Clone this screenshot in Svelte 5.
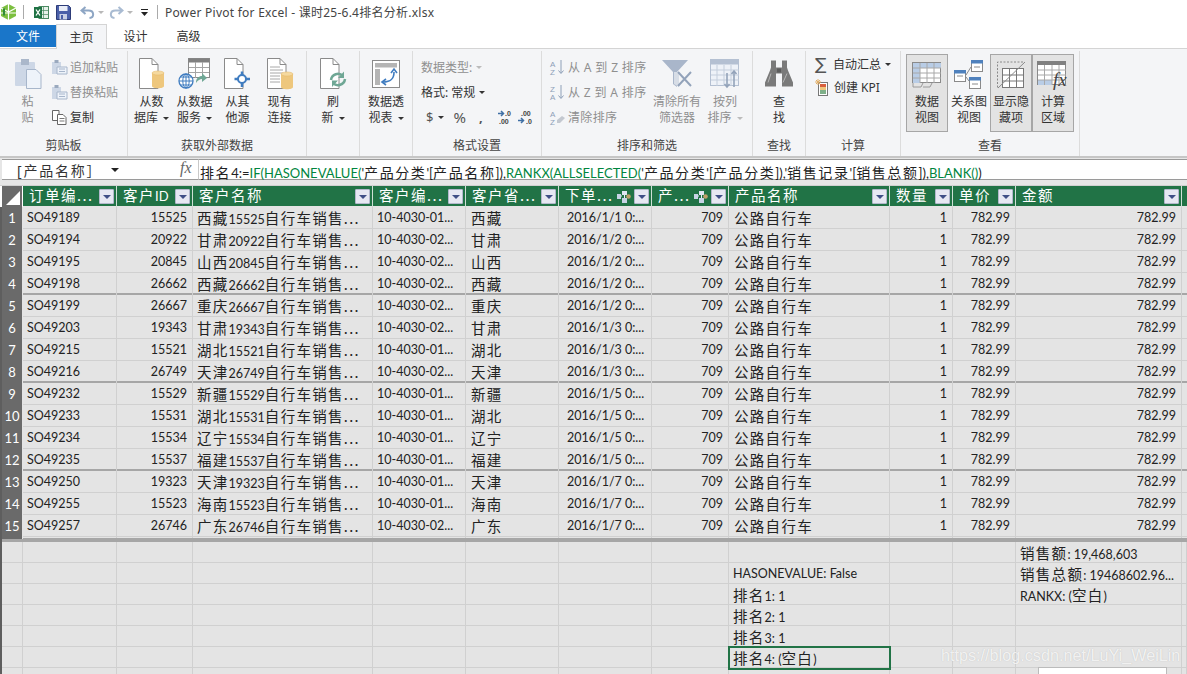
<script lang="ts">
  const filterCols = [
    { label: '订单编...', link: false },
    { label: '客户ID', link: false },
    { label: '客户名称', link: false },
    { label: '客户编...', link: false },
    { label: '客户省...', link: false },
    { label: '下单...', link: true },
    { label: '产...', link: true },
    { label: '产品名称', link: false },
    { label: '数量', link: false },
    { label: '单价', link: false },
    { label: '金额', link: false },
  ];

  const orders = [
    ['SO49189', '15525', '西藏', '01', '1/1'],
    ['SO49194', '20922', '甘肃', '02', '1/2'],
    ['SO49195', '20845', '山西', '02', '1/2'],
    ['SO49198', '26662', '西藏', '02', '1/2'],
    ['SO49199', '26667', '重庆', '02', '1/2'],
    ['SO49203', '19343', '甘肃', '02', '1/3'],
    ['SO49215', '15521', '湖北', '01', '1/3'],
    ['SO49216', '26749', '天津', '02', '1/3'],
    ['SO49232', '15529', '新疆', '01', '1/5'],
    ['SO49233', '15531', '湖北', '01', '1/5'],
    ['SO49234', '15534', '辽宁', '01', '1/5'],
    ['SO49235', '15537', '福建', '01', '1/5'],
    ['SO49250', '19323', '天津', '01', '1/7'],
    ['SO49255', '15523', '海南', '01', '1/7'],
    ['SO49257', '26746', '广东', '02', '1/7'],
  ];

  const formula = [
    ['排名4:=', ''],
    ['IF(HASONEVALUE(', 'fn'],
    ["'产品分类'[产品名称]),", ''],
    ['RANKX(ALLSELECTED(', 'fn'],
    ["'产品分类'[产品分类]),'销售记录'[销售总额]),", ''],
    ['BLANK()', 'fn'],
    [')', ''],
  ];

  // the grid font has narrow digits, CJK runs need a bigger size next to them
  function runs(text: string) {
    return text.match(/[\u3000-\u9fff\uff00-\uffef]+(?:\.\.\.)?|(?:(?![\u3000-\u9fff\uff00-\uffef]).)+/g) ?? [];
  }
  const isZh = (s: string) => /[\u3000-\u9fff\uff00-\uffef]/.test(s);
</script>

{#snippet mixed(text)}
  {#each runs(text) as r}<span class={isZh(r) ? 'zh' : ''}>{r}</span>{/each}
{/snippet}

{#snippet caret()}<i class="caret"></i>{/snippet}

{#snippet filterBtn()}
  <span class="filter"><i></i></span>
{/snippet}

{#snippet linkIcon()}
  <svg class="link" width="15" height="14" viewBox="0 0 15 14">
    <rect x="0" y="4" width="4" height="5" fill="#c8d4e6" />
    <rect x="5" y="1" width="5" height="4" fill="#dfe6f1" />
    <rect x="5" y="8" width="5" height="5" fill="#c8d4e6" />
    <path d="M4 6h1M7.500 5v3" stroke="#e9eef5" />
    <circle cx="11.500" cy="6.500" r="2.300" fill="#bfa06a" />
  </svg>
{/snippet}

{#snippet docIcon()}
  <path d="M1.500 .5H14L20 6.500V30.500H1.500Z" fill="#fff" stroke="#8a8a8a" />
  <path d="M14 .5V6.500H20" fill="none" stroke="#8a8a8a" />
{/snippet}

{#snippet dbIcon(x, y)}
  <path d="M{x} {y + 2}v13c0 3 12 3 12 0v-13Z" fill="#eec77d" />
  <ellipse cx={x + 6} cy={y + 2} rx="6" ry="2" fill="#f5d99f" stroke="#e3b765" stroke-width=".5" />
{/snippet}

<div class="app">
  <header class="titlebar">
    <svg width="17" height="18" viewBox="0 0 17 18">
      <path d="M8.500 1 16 5v8l-7.500 4L1 13V5Z" fill="#7cbf3f" />
      <path d="M8.500 1v16M1 5l7.500 4 7.500-4M1 10h15" stroke="#fff" stroke-width="1.200" fill="none" />
      <path d="M4 5.500v7" stroke="#2f8a3a" stroke-width="2" />
    </svg>
    <i class="qsep first"></i>
    <svg width="15" height="15" viewBox="0 0 15 15">
      <rect x="5" y="1.500" width="9.500" height="12" fill="#e7f1ea" stroke="#4b8a62" />
      <path d="M9.500 1.500v12M5 5.500h9.500M5 9.500h9.500" stroke="#4b8a62" stroke-width=".7" />
      <rect x="0" y="2" width="8" height="11" fill="#1f7244" />
      <path d="m2 4.500 4 6m0-6-4 6" stroke="#fff" stroke-width="1.300" />
    </svg>
    <svg class="save" width="15" height="15" viewBox="0 0 15 15">
      <path d="M.5.5h12l2 2v12H.5Z" fill="#4a5fa8" stroke="#2d3c78" />
      <rect x="3" y="1" width="8.500" height="5" fill="#e9edf7" />
      <rect x="3.500" y="9" width="7.500" height="5.500" fill="#c9d0e4" />
      <rect x="5" y="10" width="2" height="4" fill="#4a5fa8" />
    </svg>
    <svg class="undo" width="15" height="13" viewBox="0 0 15 13">
      <path d="M5.500 1 1.500 4.500l4 3.500M2 4.500h6.500c6 0 6 7 1 7.500" fill="none" stroke="#8ea6c4" stroke-width="2" />
    </svg>
    <i class="mini"></i>
    <svg class="redo" width="15" height="13" viewBox="0 0 15 13">
      <path d="M9.500 1l4 3.500-4 3.500M13 4.500H6.500c-6 0-6 7-1 7.500" fill="none" stroke="#a9bbd2" stroke-width="2" />
    </svg>
    <i class="mini"></i>
    <svg class="customize" width="7" height="7" viewBox="0 0 7 7"><path d="M0 0h7v1H0ZM0 3h7L3.500 7Z" fill="#222" /></svg>
    <i class="qsep"></i>
    <span class="doc-title">Power Pivot for Excel - 课时25-6.4排名分析.xlsx</span>
  </header>

  <nav class="tabs">
    <span class="tab file">文件</span>
    <span class="tab active">主页</span>
    <span class="tab">设计</span>
    <span class="tab">高级</span>
  </nav>

  <section class="ribbon">
    <div class="group" style="width: 128px">
      <div class="group-body">
        <div class="big off" style="width: 41px; margin-left: 7px">
          <svg class="big-icon" width="28" height="32" viewBox="0 0 28 32">
            <rect x="1" y="4" width="20" height="24" rx="1" fill="#cdd7e6" />
            <rect x="7" y="1" width="8" height="6" fill="#aab7ca" />
            <path d="M12.500 11.500H22l5 5v14H12.500Z" fill="#eef3fa" stroke="#a7b6cb" />
          </svg>
          <span>粘</span><span>贴</span>
        </div>
        <div class="stack clip">
          <div class="small off">
            <svg width="17" height="15" viewBox="0 0 17 15"><rect x="1" y="2" width="9" height="12" fill="#cdd7e6" /><rect x="3.500" y="0" width="4" height="3" fill="#9aa9be" /><path d="M6 7h10v7H6Z" fill="#eef3fa" stroke="#a7b6cb" /><path d="M8 9h6M8 11.500h6" stroke="#a7b6cb" /></svg>
            追加粘贴
          </div>
          <div class="small off">
            <svg width="17" height="15" viewBox="0 0 17 15"><rect x="1" y="2" width="9" height="12" fill="#cdd7e6" /><rect x="3.500" y="0" width="4" height="3" fill="#9aa9be" /><path d="M6 7h10v7H6Z" fill="#eef3fa" stroke="#a7b6cb" /><path d="M8 9h6M8 11.500h6" stroke="#a7b6cb" /></svg>
            替换粘贴
          </div>
          <div class="small">
            <svg width="17" height="15" viewBox="0 0 17 15"><path d="M1.500.5H8v10H1.500Z" fill="#fff" stroke="#666" /><path d="M6.500 4.500H12l3 3v7H6.500Z" fill="#fff" stroke="#666" /><path d="M8.500 8.500h5M8.500 11h5" stroke="#777" /></svg>
            复制
          </div>
        </div>
      </div>
      <div class="group-name">剪贴板</div>
    </div>

    <div class="group" style="width: 179px">
      <div class="group-body">
        <div class="big" style="width: 43px; margin-left: 2px">
          <svg class="big-icon" width="27" height="32" viewBox="0 0 27 32">
            {@render docIcon()}
            {@render dbIcon(14, 13)}
          </svg>
          <span>从数</span><span>据库 {@render caret()}</span>
        </div>
        <div class="big" style="width: 43px">
          <svg class="big-icon" width="33" height="32" viewBox="0 0 33 32">
            <rect x="10.500" y=".5" width="21" height="19" fill="#fff" stroke="#8a8a8a" />
            <rect x="10.500" y=".5" width="21" height="4" fill="#808080" />
            <path d="M17.500 4v16M24.500 4v16M11 9.500h20M11 14.500h20" stroke="#a5a5a5" />
            <circle cx="8" cy="23" r="7" fill="#fff" stroke="#3f7cc0" stroke-width="1.300" />
            <path d="M1 23h14M8 16v14M3 19h10M3 27h10" stroke="#3f7cc0" />
            <ellipse cx="8" cy="23" rx="3.200" ry="7" fill="none" stroke="#3f7cc0" />
            <path d="M18 25c0-5 3-7 6-7v-3l5 5-5 4v-3c-2 0-4 1-6 4Z" fill="#6fa795" />
          </svg>
          <span>从数据</span><span>服务 {@render caret()}</span>
        </div>
        <div class="big" style="width: 43px">
          <svg class="big-icon" width="30" height="32" viewBox="0 0 30 32">
            {@render docIcon()}
            <circle cx="19" cy="21" r="4" fill="#fff" stroke="#3f7cc0" stroke-width="2" />
            <path d="M19 13.500V17M19 25v4M11.500 21H15M23 21h4" stroke="#3f7cc0" stroke-width="2.500" />
          </svg>
          <span>从其</span><span>他源</span>
        </div>
        <div class="big" style="width: 41px">
          <svg class="big-icon" width="28" height="32" viewBox="0 0 28 32">
            {@render docIcon()}
            <path d="M4 9h10M4 12h13M4 15h13M4 18h10M4 21h10M4 24h10" stroke="#a8a8a8" />
            {@render dbIcon(15, 14)}
          </svg>
          <span>现有</span><span>连接</span>
        </div>
      </div>
      <div class="group-name">获取外部数据</div>
    </div>

    <div class="group" style="width: 53px">
      <div class="group-body">
        <div class="big" style="width: 52px">
          <svg class="big-icon" width="28" height="32" viewBox="0 0 28 32">
            {@render docIcon()}
            <path d="M12 22a7 7 0 0 1 12-4M26 21a7 7 0 0 1-12 4" fill="none" stroke="#6fa795" stroke-width="2.500" />
            <path d="M25 13.500V20h-6ZM13 29v-6.500h6Z" fill="#6fa795" />
          </svg>
          <span>刷</span><span>新 {@render caret()}</span>
        </div>
      </div>
    </div>

    <div class="group" style="width: 53px">
      <div class="group-body">
        <div class="big" style="width: 52px">
          <svg class="big-icon" width="28" height="28" viewBox="0 0 28 28">
            <rect x=".5" y=".5" width="27" height="27" fill="#fff" stroke="#8a8a8a" />
            <rect x="3" y="3" width="22" height="4.500" fill="#b5b5b5" />
            <rect x="3" y="9" width="5" height="16" fill="#b5b5b5" />
            <path d="M11 22c8 0 11-3 11-10" fill="none" stroke="#3f7cc0" stroke-width="1.600" />
            <path d="M19 13l3-4 3 4M14 19l-4 3 4 3" fill="none" stroke="#3f7cc0" stroke-width="1.600" />
          </svg>
          <span>数据透</span><span>视表 {@render caret()}</span>
        </div>
      </div>
    </div>

    <div class="group" style="width: 129px">
      <div class="group-body">
        <div class="stack format">
          <div class="small off">数据类型: <i class="caret pale"></i></div>
          <div class="small">格式: 常规 {@render caret()}</div>
          <div class="small numfmt">
            <span class="sym">$</span>{@render caret()}<span class="sym pct">%</span><span class="sym comma">,</span>
            <svg class="over" width="17" height="15" viewBox="0 0 17 15"><path d="M1 3.500h5M4 1l2.500 2.500L4 6" fill="none" stroke="#3f6fa5" stroke-width="1.500" /><text x="8" y="6" class="tiny">.0</text><text x="2" y="14" class="tiny">.00</text></svg>
            <svg class="over" width="17" height="15" viewBox="0 0 17 15"><text x="4" y="6" class="tiny">.00</text><path d="M1 10.500h5M4 8l2.500 2.500L4 13" fill="none" stroke="#3f6fa5" stroke-width="1.500" /><text x="9" y="14" class="tiny">.0</text></svg>
          </div>
        </div>
      </div>
      <div class="group-name">格式设置</div>
    </div>

    <div class="group" style="width: 211px">
      <div class="group-body">
        <div class="stack sort">
          <div class="small off spaced">
            <svg class="over" width="15" height="15" viewBox="0 0 15 15"><text x="0" y="7" class="az">A</text><text x="0" y="15" class="az">Z</text><path d="M11 0v13M8.500 10.500 11 13.500l2.500-3" fill="none" stroke="#8ea0b8" /></svg>
            从 A 到 Z 排序
          </div>
          <div class="small off spaced">
            <svg class="over" width="15" height="15" viewBox="0 0 15 15"><text x="0" y="7" class="az">Z</text><text x="0" y="15" class="az">A</text><path d="M11 0v13M8.500 10.500 11 13.500l2.500-3" fill="none" stroke="#8ea0b8" /></svg>
            从 Z 到 A 排序
          </div>
          <div class="small off spaced">
            <svg class="over" width="15" height="15" viewBox="0 0 15 15"><text x="0" y="7" class="az">A</text><text x="0" y="15" class="az">Z</text><path d="m7 10 5-4 3 2-5 5H7Z" fill="#c3c8d0" /></svg>
            清除排序
          </div>
        </div>
        <div class="big off" style="width: 52px">
          <svg class="big-icon" width="32" height="30" viewBox="0 0 32 30">
            <path d="M1 1h26L16 13v15l-4-3V13Z" fill="#a9b6ca" />
            <path d="M13 13h5v15l-5-3Z" fill="#d7dde6" />
            <path d="m17 13 13 14M30 13 17 27" stroke="#93a3ba" stroke-width="2" />
          </svg>
          <span>清除所有</span><span>筛选器</span>
        </div>
        <div class="big off" style="width: 44px">
          <svg class="big-icon" width="30" height="30" viewBox="0 0 30 30">
            <rect x=".5" y=".5" width="28" height="26" fill="#eef2f8" stroke="#b4c0d2" />
            <rect x=".5" y=".5" width="28" height="5" fill="#b4c0d2" />
            <path d="M7 6v21M14 6v21M21 6v21M1 11h28M1 16h28M1 21h28" stroke="#c4cedc" />
            <path d="M17 14v14M14.500 25l2.500 3 2.500-3M24 28V12M21.500 15l2.500-3 2.500 3" fill="none" stroke="#93a3ba" stroke-width="1.600" />
          </svg>
          <span>按列</span><span>排序 <i class="caret pale"></i></span>
        </div>
      </div>
      <div class="group-name">排序和筛选</div>
    </div>

    <div class="group" style="width: 53px">
      <div class="group-body">
        <div class="big" style="width: 52px">
          <svg class="big-icon" width="28" height="27" viewBox="0 0 28 27">
            <path d="M6 0h5v7h6V0h5v7l1 3 5 12v4H17V13h-6v13H0v-4l5-12 1-3Z" fill="#7a7a7a" />
            <path d="M12 8h4v4h-4Z" fill="#5c5c5c" />
            <path d="M3 22l3-9M18 22l4-9" stroke="#b5b5b5" />
          </svg>
          <span>查</span><span>找</span>
        </div>
      </div>
      <div class="group-name">查找</div>
    </div>

    <div class="group" style="width: 95px">
      <div class="group-body">
        <div class="stack calc">
          <div class="small">
            <span class="sigma">∑</span>自动汇总 {@render caret()}
          </div>
          <div class="small">
            <svg class="kpi" width="14" height="17" viewBox="0 0 14 17">
              <rect x="3.500" y="3.500" width="9" height="13" fill="#fff" stroke="#777" />
              <rect x="5" y="5" width="6" height="3" fill="#d9603e" />
              <rect x="5" y="8" width="6" height="3" fill="#eec77d" />
              <rect x="5" y="11" width="6" height="4" fill="#7fb08a" />
              <path d="M3 0v6M0 3h6M1 1l4 4M5 1 1 5" stroke="#e2b06a" />
            </svg>
            创建 KPI
          </div>
        </div>
      </div>
      <div class="group-name">计算</div>
    </div>

    <div class="group views" style="width: 179px">
      <div class="group-body">
        <div class="big view on">
          <svg class="big-icon" width="30" height="26" viewBox="0 0 30 26">
            <rect x=".5" y=".5" width="28" height="20" fill="#fff" stroke="#8a8a8a" />
            <rect x="1" y="1" width="28" height="5" fill="#b9cde6" />
            <rect x="1" y="1" width="7" height="20" fill="#b9cde6" />
            <path d="M8 1v20M15 1v20M22 1v20M1 6h28M1 11h28M1 16h28" stroke="#a8a8a8" />
            <path d="M1 21v4h8l2-4M11 25h7l2-4" fill="none" stroke="#9a9a9a" />
          </svg>
          <span>数据</span><span>视图</span>
        </div>
        <div class="big view">
          <svg class="big-icon" width="30" height="30" viewBox="0 0 30 30">
            <rect x=".5" y="10.500" width="11" height="11" fill="#fff" stroke="#8a8a8a" /><rect x="0" y="10" width="12" height="3.500" fill="#4f81bd" />
            <rect x="17.500" y=".5" width="11" height="11" fill="#fff" stroke="#8a8a8a" /><rect x="17" y="0" width="12" height="3.500" fill="#4f81bd" />
            <rect x="15.500" y="17.500" width="11" height="11" fill="#fff" stroke="#8a8a8a" /><rect x="15" y="17" width="12" height="3.500" fill="#4f81bd" />
            <path d="M12 15 17 7M12 17l3 4M3 16h6M20 7h6M18 24h6" stroke="#8a8a8a" />
          </svg>
          <span>关系图</span><span>视图</span>
        </div>
        <div class="big view on">
          <svg class="big-icon" width="30" height="28" viewBox="0 0 30 28">
            <path d="M1.500 26.500V1H28" fill="none" stroke="#8a8a8a" stroke-dasharray="2 1.500" />
            <rect x="6.500" y="7.500" width="21" height="19" fill="#fff" stroke="#777" />
            <path d="M13.500 8v19M20.500 8v19M7 14h21M7 20h21" stroke="#777" />
            <path d="M2 27 29 1" stroke="#8a8a8a" />
          </svg>
          <span>显示隐</span><span>藏项</span>
        </div>
        <div class="big view on">
          <svg class="big-icon over" width="32" height="28" viewBox="0 0 32 28">
            <rect x=".5" y=".5" width="28" height="23" fill="#fff" stroke="#8a8a8a" />
            <rect x="0" y="0" width="29" height="4" fill="#808080" />
            <rect x="1" y="19" width="14" height="5" fill="#b9cde6" />
            <path d="M7.500 4v20M15 4v20M22 4v20M1 9h28M1 14h28M1 19h28" stroke="#a8a8a8" />
            <text x="16" y="25" class="fx-big">fx</text>
          </svg>
          <span>计算</span><span>区域</span>
        </div>
      </div>
      <div class="group-name">查看</div>
    </div>
  </section>

  <div class="formula-bar">
    <div class="name-box">
      <span class="name-text">[产品名称］</span>
      <i class="name-arrow"></i>
      <span class="fx">fx</span>
    </div>
    <div class="formula">
      {#each formula as [text, cls]}<span class={cls}>{@render mixed(text)}</span>{/each}
    </div>
  </div>

  <div class="sheet">
    <div class="row head">
      <div class="corner"><i></i></div>
      {#each filterCols as col}
        <div class="th">
          <span class="th-label">{@render mixed(col.label)}</span>
          {#if col.link}{@render linkIcon()}{/if}
          {@render filterBtn()}
        </div>
      {/each}
      <div class="th tail"></div>
    </div>

    {#each orders as [so, cid, prov, code, day], i}
      <div class="row data" class:break={(i + 1) % 4 === 0 && i < 12}>
        <div class="num">{i + 1}</div>
        <div class="td">{so}</div>
        <div class="td right">{cid}</div>
        <div class="td name">{@render mixed(`${prov}${cid}自行车销售...`)}</div>
        <div class="td">10-4030-{code}...</div>
        <div class="td zh-cell">{@render mixed(prov)}</div>
        <div class="td date">2016/{day} 0:...</div>
        <div class="td right">709</div>
        <div class="td zh-cell">{@render mixed('公路自行车')}</div>
        <div class="td right">1</div>
        <div class="td right">782.99</div>
        <div class="td right">782.99</div>
        <div class="td"></div>
      </div>
    {/each}

    <div class="band"></div>

    <div class="row calc-row">
      <div></div><div></div><div></div><div></div><div></div><div></div><div></div><div></div><div></div><div></div><div></div>
      <div class="td">{@render mixed('销售额: 19,468,603')}</div><div></div>
    </div>
    <div class="row calc-row">
      <div></div><div></div><div></div><div></div><div></div><div></div><div></div><div></div>
      <div class="td">HASONEVALUE: False</div><div></div><div></div>
      <div class="td">{@render mixed('销售总额: 19468602.96...')}</div><div></div>
    </div>
    <div class="row calc-row">
      <div></div><div></div><div></div><div></div><div></div><div></div><div></div><div></div>
      <div class="td">{@render mixed('排名1: 1')}</div><div></div><div></div>
      <div class="td">{@render mixed('RANKX: (空白)')}</div><div></div>
    </div>
    <div class="row calc-row">
      <div></div><div></div><div></div><div></div><div></div><div></div><div></div><div></div>
      <div class="td">{@render mixed('排名2: 1')}</div><div></div><div></div><div></div><div></div>
    </div>
    <div class="row calc-row">
      <div></div><div></div><div></div><div></div><div></div><div></div><div></div><div></div>
      <div class="td">{@render mixed('排名3: 1')}</div><div></div><div></div><div></div><div></div>
    </div>
    <div class="row calc-row">
      <div></div><div></div><div></div><div></div><div></div><div></div><div></div><div></div>
      <div class="td picked">{@render mixed('排名4: (空白)')}</div><div></div><div></div><div></div><div></div>
    </div>
    <div class="row calc-row">
      <div></div><div></div><div></div><div></div><div></div><div></div><div></div><div></div><div></div><div></div><div></div><div></div><div></div>
    </div>

    <div class="watermark">https://blog.csdn.net/LuYi_WeiLin</div>
    <div class="corner-box"></div>
  </div>
</div>

<style>
  :global(body) {
    margin: 0;
    background: #fff;
  }

  .app {
    width: 1187px;
    height: 674px;
    overflow: hidden;
    font-family: "Noto Sans", "Noto Sans CJK SC", sans-serif;
    font-size: 12px;
    color: #333;
  }

  /* title bar */
  .titlebar {
    height: 24px;
    display: flex;
    align-items: center;
    padding-left: 0;
    box-sizing: border-box;
  }
  .qsep {
    width: 1px;
    height: 14px;
    background: #aaa;
    margin: 0 7px 0 9px;
  }
  .qsep.first {
    margin: 0 10px 0 6px;
  }
  .save {
    margin-left: 7px;
  }
  .undo {
    margin-left: 9px;
  }
  .redo {
    margin-left: 5px;
  }
  .mini {
    width: 0;
    height: 0;
    margin-left: 3px;
    border-left: 3px solid transparent;
    border-right: 3px solid transparent;
    border-top: 3px solid #b8b8b8;
  }
  .customize {
    margin-left: 8px;
  }
  .doc-title {
    font-size: 12px;
    color: #444;
    letter-spacing: 0.25px;
    white-space: nowrap;
  }

  /* tabs */
  .tabs {
    height: 25px;
    display: flex;
    align-items: stretch;
    box-sizing: border-box;
    border-bottom: 1px solid #d4d4d4;
  }
  .tab {
    width: 53px;
    display: flex;
    align-items: center;
    justify-content: center;
    font-size: 12px;
    color: #333;
  }
  .tab.file {
    width: 56px;
    height: 22px;
    margin-top: 1px;
    background: #1a76c9;
    color: #fff;
  }
  .tab.active {
    width: 51px;
    margin-right: 2px;
    background: #f4f5f7;
    height: 25px;
    border: 1px solid #d4d4d4;
    border-bottom: none;
    box-sizing: border-box;
  }

  /* ribbon */
  .ribbon {
    height: 105px;
    display: flex;
    background: #f4f5f7;
    border-bottom: 2px solid #c6c6c6;
    box-sizing: content-box;
    padding-top: 2px;
  }
  .group {
    box-sizing: border-box;
    height: 105px;
    display: flex;
    flex-direction: column;
    border-right: 1px solid #dcdcdc;
    flex: none;
  }
  .group-body {
    flex: 1;
    display: flex;
    min-height: 0;
  }
  .group-name {
    height: 22px;
    line-height: 23px;
    text-align: center;
    color: #444;
  }
  .big {
    display: flex;
    flex-direction: column;
    align-items: center;
    flex: none;
    padding-top: 7px;
    box-sizing: border-box;
    line-height: 16px;
    white-space: nowrap;
  }
  .big-icon {
    height: 32px;
    margin-bottom: 4px;
    flex: none;
  }
  .off {
    color: #8f8f8f;
  }
  .stack {
    display: flex;
    flex-direction: column;
    gap: 8px;
    padding-top: 8px;
    flex: none;
  }
  .clip {
    margin-left: 3px;
  }
  .format {
    margin-left: 8px;
    width: 120px;
  }
  .sort {
    margin-left: 8px;
    width: 101px;
  }
  .calc {
    margin-left: 9px;
    gap: 6px;
    padding-top: 5px;
  }
  .small {
    height: 17px;
    display: flex;
    align-items: center;
    gap: 2px;
    white-space: nowrap;
    line-height: 17px;
  }
  .spaced {
    gap: 3px;
    letter-spacing: 0.35px;
  }
  .over {
    overflow: visible;
  }
  .kpi {
    margin-right: 3px;
  }
  .caret {
    display: inline-block;
    width: 0;
    height: 0;
    margin-left: 2px;
    vertical-align: middle;
    border-left: 3px solid transparent;
    border-right: 3px solid transparent;
    border-top: 3px solid #333;
  }
  .caret.pale {
    border-top-color: #bbb;
  }
  .numfmt {
    gap: 3px;
    padding-left: 5px;
  }
  .sym {
    font-size: 13px;
    color: #555;
  }
  .pct {
    font-size: 15px;
    margin-left: 6px;
  }
  .comma {
    margin: 0 11px 0 10px;
    font-weight: 700;
  }
  .tiny {
    font-size: 7px;
    font-weight: 700;
    fill: #444;
    font-family: "Liberation Sans", sans-serif;
  }
  .az {
    font-size: 8px;
    fill: #8ea0b8;
    font-family: "Liberation Sans", sans-serif;
  }
  .sigma {
    width: 16px;
    font-size: 17px;
    color: #555;
    font-family: "DejaVu Sans", sans-serif;
    line-height: 17px;
  }
  .view {
    width: 42px;
    height: 78px;
    margin-top: 3px;
    padding-top: 4px;
    border: 1px solid transparent;
  }
  .view .big-icon {
    margin-bottom: 3px;
  }
  .view:first-child {
    margin-left: 5px;
  }
  .view.on {
    background: #e3e3e3;
    border-color: #a6a6a6;
  }
  .fx-big {
    font-family: "Liberation Serif", serif;
    font-style: italic;
    font-size: 19px;
    fill: #444;
  }

  /* formula bar */
  .formula-bar {
    height: 28px;
    box-sizing: border-box;
    padding: 1px 0 5px;
    display: flex;
    background: #e6e6e6;
    border-bottom: 1px solid #d0d0d0;
  }
  .name-box {
    width: 196px;
    margin-left: 2px;
    flex: none;
    display: flex;
    align-items: center;
    background: #fff;
    box-sizing: border-box;
    border-top: 1px solid #9a9a9a;
    border-bottom: 1px solid #9a9a9a;
    position: relative;
  }
  .name-text {
    margin-left: 15px;
    font-size: 14px;
    letter-spacing: 1.800px;
    color: #333;
  }
  .name-arrow {
    position: absolute;
    left: 109px;
    top: 8px;
    border-left: 4px solid transparent;
    border-right: 4px solid transparent;
    border-top: 4px solid #222;
  }
  .fx {
    position: absolute;
    left: 178px;
    top: -1px;
    font-family: "Liberation Serif", serif;
    font-style: italic;
    font-size: 16px;
    color: #666;
  }
  .formula {
    flex: 1;
    min-height: 0;
    padding-left: 1px;
    background: #fff;
    border-top: 1px solid #9a9a9a;
    border-bottom: 1px solid #9a9a9a;
    border-left: 1px solid #c9c9c9;
    font-family: Lato, "Noto Sans CJK SC", sans-serif;
    font-size: 13px;
    line-height: 25px;
    color: #222;
    white-space: nowrap;
  }
  .fn {
    color: #00853e;
  }
  .zh {
    font-family: "Noto Sans CJK SC", sans-serif;
    font-size: 14px;
  }
  .formula .zh {
    font-size: 14px;
    letter-spacing: 1.600px;
  }

  /* sheet */
  .sheet {
    position: relative;
    background: #e4e4e4;
    height: 488px;
    font-family: Lato, "Noto Sans CJK SC", sans-serif;
    font-size: 12.500px;
    color: #222;
    border-left: 2px solid #5e5e5e;
    box-sizing: border-box;
  }
  .row {
    display: grid;
    grid-template-columns: 21px 94px 76px 180px 93px 93px 93px 77px 161px 63px 63px 166px 5px;
  }
  .head {
    height: 21px;
    background: #217346;
    border-bottom: 1px solid #e4e4e4;
    box-sizing: border-box;
    margin-left: -2px;
    grid-template-columns: 23px 94px 76px 180px 93px 93px 93px 77px 161px 63px 63px 166px 5px;
  }
  .corner {
    background: #6a6a6a;
    border-left: 2px solid #fff;
    border-right: 1px solid #fff;
    position: relative;
    box-sizing: border-box;
  }
  .corner i {
    position: absolute;
    right: 2px;
    bottom: 2px;
    width: 0;
    height: 0;
    border-left: 14px solid transparent;
    border-bottom: 14px solid #fff;
  }
  .th {
    display: flex;
    align-items: center;
    border-right: 1px solid #cfe0d6;
    box-sizing: border-box;
    color: #fff;
    padding: 0 2px 0 6px;
    min-width: 0;
  }
  .th.tail {
    border-right: 0;
    padding: 0;
  }
  .th-label {
    flex: 1;
    white-space: nowrap;
    font-size: 13px;
    line-height: 18px;
    margin-bottom: 2px;
  }
  .th .zh {
    font-size: 14.500px;
    letter-spacing: 1.500px;
  }
  .filter {
    width: 15px;
    height: 15px;
    flex: none;
    box-sizing: border-box;
    display: flex;
    align-items: center;
    justify-content: center;
    background: #e6e8f2;
    border: 1px solid #b3b8cc;
    border-radius: 1px;
  }
  .filter i {
    width: 0;
    height: 0;
    border-left: 4px solid transparent;
    border-right: 4px solid transparent;
    border-top: 4px solid #3f4f86;
  }
  .link {
    flex: none;
    margin-right: 2px;
  }

  .data {
    height: 22px;
    box-sizing: border-box;
    line-height: 20px;
    border-bottom: 1px solid #d0d0d0;
  }
  .data.break {
    border-bottom: 2px solid #a6a6a6;
  }
  .num {
    background: #6a6a6a;
    color: #fff;
    text-align: center;
    font-size: 13px;
    border-right: 1px solid #e4e4e4;
    box-sizing: border-box;
    margin-bottom: -1px;
    line-height: 23px;
  }
  .td {
    box-sizing: border-box;
    padding: 1px 5px 0 4px;
    border-right: 1px solid #d0d0d0;
    white-space: nowrap;
    min-width: 0;
  }
  .right {
    text-align: right;
  }
  .td .zh {
    font-size: 14.500px;
    letter-spacing: 1.300px;
  }
  .date {
    padding-left: 8px;
  }
  .zh-cell {
    padding-left: 5px;
  }
  .band {
    height: 5px;
    margin-top: 0;
    background: #a6a6a6;
    border-top: 1px solid #e4e4e4;
    box-sizing: border-box;
  }
  .calc-row {
    height: 21px;
    line-height: 19px;
    box-sizing: border-box;
    border-bottom: 1px solid #d0d0d0;
  }
  .calc-row > div {
    border-right: 1px solid #d0d0d0;
    box-sizing: border-box;
  }
  .picked {
    outline: 2px solid #217346;
    outline-offset: -1px;
    position: relative;
  }
  .watermark {
    position: absolute;
    left: 939px;
    top: 460px;
    color: rgba(255, 255, 255, 0.8);
    font-family: "Liberation Sans", sans-serif;
    font-size: 16.200px;
    white-space: nowrap;
    text-shadow: 0 0 1px rgba(160, 160, 160, 0.6);
  }
  .corner-box {
    position: absolute;
    left: 1036px;
    top: 481px;
    width: 127px;
    height: 10px;
    background: #fff;
    border: 1px solid #bbb;
  }
</style>
